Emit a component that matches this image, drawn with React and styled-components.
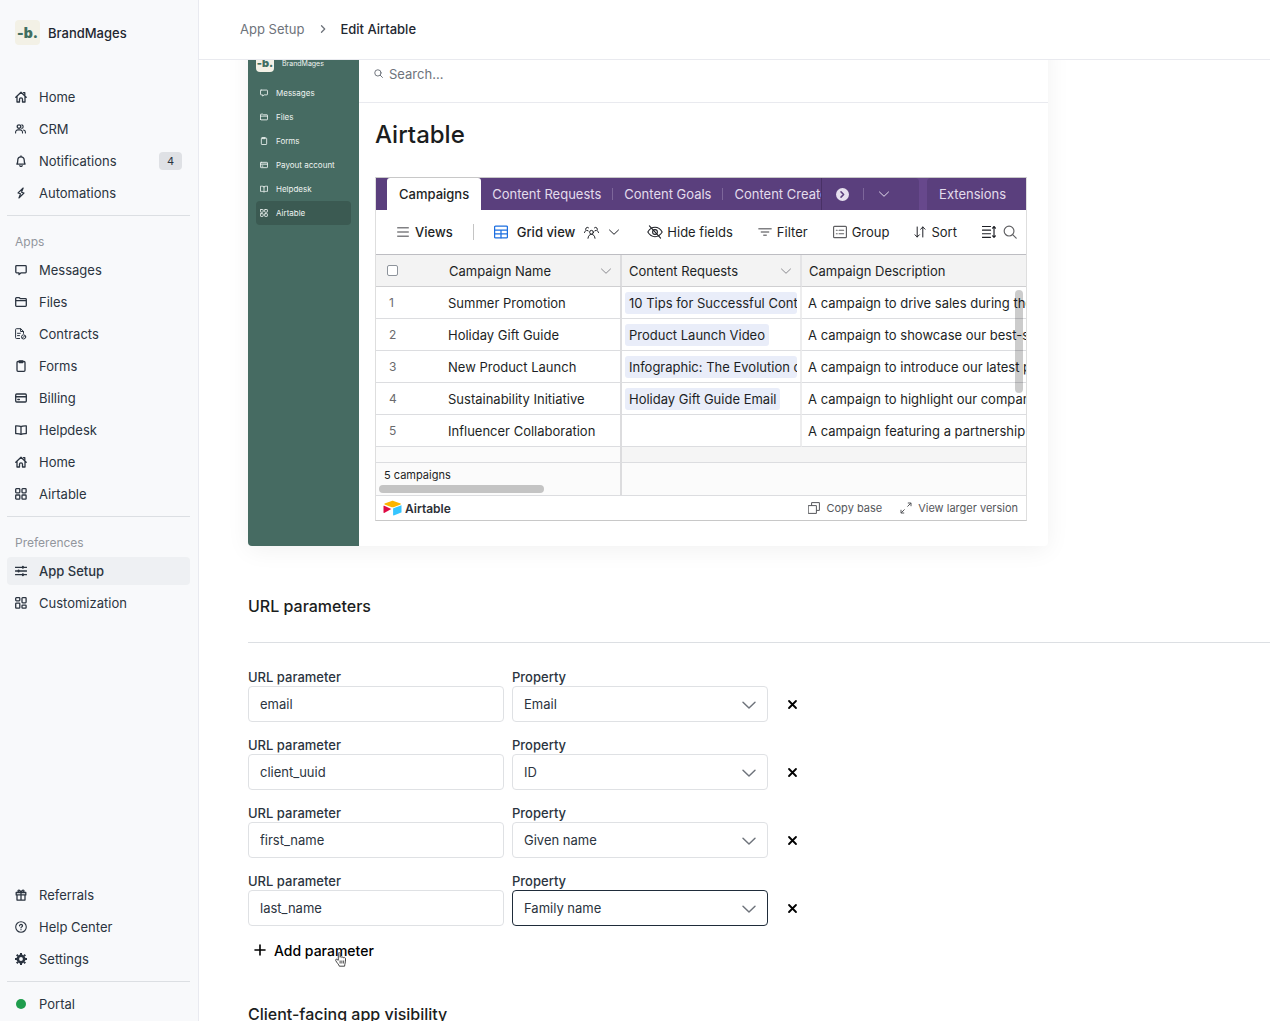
import { useLayoutEffect, useRef, useState } from 'react';
import styled, { createGlobalStyle } from 'styled-components';

const GlobalStyle = createGlobalStyle`
  * {
    box-sizing: border-box;
  }
  body {
    margin: 0;
    background: #fff;
    color: #2b3440;
    font-family: Inter, "Liberation Sans", sans-serif;
    font-size: 13px;
  }
  button, input, select {
    font: inherit;
    color: inherit;
  }
  button {
    padding: 0;
    border: 0;
    background: none;
    cursor: pointer;
  }
  h1, h2 {
    margin: 0;
    font-weight: 500;
  }
  ul {
    margin: 0;
    padding: 0;
    list-style: none;
  }
  a {
    color: inherit;
    text-decoration: none;
  }
`

/* ---------- icons ---------- */

const Svg = styled.svg`
  display: block;
  flex: none;
  fill: none;
  stroke: currentColor;
  stroke-width: ${props => props.$line || 1.3};
  stroke-linecap: round;
  stroke-linejoin: round;
`

const shapes = {
  home: <><path d="M.8 6.2 6 1.3l5.200 4.900M2 5.400v5.600h2.500V8.300a1.500 1.500 0 0 1 3 0V11H10V5.400" /><path d="M8.500 1.700h1.300v2.300" /></>,
  crm: <><circle cx="4" cy="3.600" r="1.800" /><path d="M.6 9.900v-.8a2.200 2.200 0 0 1 2.200-2.200h2.500a2.200 2.200 0 0 1 2.200 2.200v.8M6.800 1.900a1.800 1.800 0 0 1 0 3.500M8.500 7a2.200 2.200 0 0 1 1.900 2.100v.8" strokeWidth="1.100" /></>,
  bell: <><path d="M1.900 9.100h8.200C9.300 8 9.200 7 9.200 5a3.200 3.200 0 0 0-6.400 0c0 2-.1 3-.9 4.100z" /><path d="M4.900 10.700a1.200 1.200 0 0 0 2.200 0M6 1v.6" /></>,
  bolt: <path d="M8.200 1 3 6l2.500.7-1.600 4.300L9 6l-2.500-.7z" strokeWidth="1.100" />,
  message: <path d="M1.600 1.600h8.800a.8.800 0 0 1 .8.800v5.600a.8.800 0 0 1-.8.800H6.200L4 10.600V8.800H1.600a.8.800 0 0 1-.8-.8V2.400a.8.800 0 0 1 .8-.8z" />,
  folder: <path d="M.7 9.500v-7a.8.800 0 0 1 .8-.8h2.800l1.200 1h5a.8.800 0 0 1 .8.800v6a.8.800 0 0 1-.8.800h-9a.8.800 0 0 1-.8-.8zM.7 4.700h10.600" />,
  contract: <><path d="M4.600 10.500H1.400a.8.800 0 0 1-.8-.8V1.500a.8.800 0 0 1 .8-.8h4.300l2.800 2.700v2M5.600.8v2.700h2.800M2.500 5.300h2.800M2.500 7.600h2" strokeWidth="1" /><circle cx="8.600" cy="8.900" r="2.100" strokeWidth="1" /><path d="m7.400 10.100 2.400-2.400" strokeWidth="1" /></>,
  clipboard: <><rect x="2" y="1.500" width="8" height="9.800" rx="1" /><path d="M4.300.9h3.400v1.600H4.300z" /></>,
  card: <><rect x=".7" y="2" width="10.600" height="8" rx="1" /><path d="M.7 4.700h10.600M2.900 7.600h1.400" strokeWidth="1.500" /></>,
  book: <path d="M6 2.600C5 1.900 3.500 1.700.7 1.800v7.800C3.500 9.500 5 9.700 6 10.400c1-.7 2.500-.9 5.300-.8V1.800C8.500 1.700 7 1.900 6 2.600zm0 0v7.800" />,
  grid: <><rect x=".7" y=".7" width="4.100" height="4.100" rx=".7" /><rect x="7" y=".7" width="4.100" height="4.100" rx=".7" /><rect x=".7" y="7" width="4.100" height="4.100" rx=".7" /><rect x="7" y="7" width="4.100" height="4.100" rx=".7" /></>,
  sliders: <><path d="M.5 2.300h11M.5 6h11M.5 9.700h11" /><path d="M7.900 1.800v1M3.600 5.500v1M7.900 9.200v1" strokeWidth="2" /></>,
  blocks: <><rect x=".7" y=".7" width="4.100" height="3.100" rx=".7" /><rect x="7" y=".7" width="4.100" height="5.100" rx=".7" /><rect x=".7" y="6.100" width="4.100" height="5.100" rx=".7" /><rect x="7" y="8.100" width="4.100" height="3.100" rx=".7" /></>,
  gift: <path d="M1.200 3.500h9.600v2.400H1.200zM2 5.900h8v5.200H2zM6 3.500v7.600M6 3.400C4.900.5 2.700.7 3 2.200c.2.900 1.600 1.200 3 1.200zM6 3.400C7.100.5 9.300.7 9 2.200c-.2.900-1.600 1.200-3 1.200z" />,
  help: <><circle cx="6" cy="6" r="5.300" strokeWidth="1.100" /><path d="M4.500 4.800a1.500 1.300 0 1 1 2.400 1c-.6.300-.9.500-.9 1M6 8.600v.1" strokeWidth="1.200" /></>,
  gear: <><circle cx="6" cy="6" r="3.200" strokeWidth="2.600" /><path d="M6 0v2M6 10v2M0 6h2M10 6h2M1.700 1.700l1.200 1.200M9.100 9.100l1.200 1.200M1.700 10.300l1.200-1.200M9.100 2.900l1.200-1.200" strokeWidth="2" strokeLinecap="butt" /></>,
  chevronRight: <path d="m4 2.500 3.500 3.500L4 9.500" />,
  crumb: <path d="m5.500 2.800 3.200 3.200-3.200 3.200" />,
  chevronDown: <path d="M1.500 4 6 8.300 10.500 4" />,
  search: <><circle cx="5.200" cy="5.200" r="4.200" /><path d="m8.300 8.300 3 3" /></>,
  close: <path d="m2.200 2.200 7.600 7.600M9.800 2.200 2.200 9.800" />,
  plus: <path d="M6 1v10M1 6h10" />,
  menu: <path d="M.2 1.800h11.600M.2 6h11.600M.2 10.200h11.600" strokeLinecap="butt" />,
  table: <><rect x=".5" y="1" width="11" height="10" rx=".8" /><path d="M.5 4.300h11M.5 7.600h11M6 4.300V11" /></>,
  people: <><circle cx="6" cy="5.800" r="1.500" /><path d="M3.200 10.600c.2-2 1.300-3.100 2.800-3.100s2.600 1.100 2.800 3.100M3.600 2.200a1.300 1.300 0 1 0-1.700 2.200C1.100 4.600.6 5.100.4 6M3.300 4.700l-.7-.3M8.400 2.200a1.300 1.300 0 1 1 1.700 2.200c.8.200 1.300.7 1.500 1.600M8.700 4.700l.7-.3" /></>,
  eyeOff: <><path d="M.6 6C2 3.700 3.900 2.500 6 2.500s4 1.200 5.400 3.500C10 8.300 8.100 9.500 6 9.500S2 8.300.6 6z" /><circle cx="6" cy="6" r="1.800" /><path d="m1.800 1.400 8.400 9.200" /></>,
  filter: <path d="M.3 3.200h11.400M2.400 6h7.200M4.500 8.800h3" strokeLinecap="butt" />,
  group: <><rect x=".5" y="1.200" width="11" height="9.600" rx=".8" /><path d="M2.900 4.500h.7M5.200 4.500h3.900M2.900 7.500h.7M5.200 7.500h3.900" /></>,
  sort: <path d="M3.200 1v10M1 8.800 3.200 11l2.200-2.200M8.800 11V1M6.600 3.200 8.800 1 11 3.200" />,
  rowHeight: <path d="M.3 1.300h7M.3 4.400h7M.3 7.500h7M.3 10.600h7M10.300 1.400v9M9.100 2.600l1.200-1.300 1.200 1.300M9.100 9.300l1.200 1.300 1.200-1.300" />,
  copy: <path d="M.6 3.600h7.800v7.800H.6zM3.600 3.500V.6h7.800v7.800H8.500" />,
  expand: <path d="M7.700 4.300 10.800 1.200M8.200 1h2.800v2.800M4.300 7.700 1.200 10.800M1 8.200V11h2.800" />,
}

function Icon({ name, size = 12, line }){
  return <Svg width={size} height={size} viewBox="0 0 12 12" $line={line} aria-hidden="true">{shapes[name]}</Svg>
}

/* ---------- app sidebar ---------- */

const Page = styled.div`
  display: flex;
  height: 100vh;
`
const Sidebar = styled.aside`
  display: flex;
  flex-direction: column;
  flex: none;
  width: 199px;
  padding: 20px 8px 3px 7px;
  border-right: 1px solid #e9eaf0;
  background: #f8f9fb;
`
const Brand = styled.div`
  display: flex;
  align-items: center;
  gap: 8px;
  margin-bottom: 38px;
  padding-left: 8px;
  color: #1f2731;
  font-size: 13px;
  font-weight: 500;
`
const Logo = styled.span`
  display: flex;
  align-items: center;
  justify-content: center;
  width: ${props => props.$size}px;
  height: ${props => props.$size}px;
  border-radius: 4px;
  background: #f3f1e6;
  color: #416e60;
  font-size: ${props => props.$text}px;
  font-weight: 900;
`
const NavList = styled.ul`
  display: flex;
  flex-direction: column;
  gap: 4px;
`
const NavLink = styled.a`
  display: flex;
  align-items: center;
  gap: 12px;
  height: 28px;
  padding: 0 8px;
  border-radius: 4px;
  background: ${props => props.$active ? '#eef0f3' : 'transparent'};
  font-weight: ${props => props.$active ? 500 : 400};
`
const Count = styled.span`
  margin-left: auto;
  padding: 0 8px;
  border-radius: 4px;
  background: #dfe1e5;
  font-size: 11px;
  line-height: 18px;
`
const Line = styled.hr`
  width: 100%;
  height: 1px;
  margin: 8px 0;
  border: 0;
  background: #dcdfe3;
`
const NavTitle = styled.div`
  margin: 8px 0 4px;
  padding-left: 8px;
  color: #92969d;
  font-size: 12px;
  line-height: 20px;
`
const Spacer = styled.div`
  flex: 1;
`
const Dot = styled.span`
  width: 10px;
  height: 10px;
  margin: 0 1px;
  border-radius: 50%;
  background: #1f9d4d;
`

const mainNav = [
  { icon: 'home', label: 'Home' },
  { icon: 'crm', label: 'CRM' },
  { icon: 'bell', label: 'Notifications', count: 4 },
  { icon: 'bolt', label: 'Automations' },
]
const appsNav = [
  { icon: 'message', label: 'Messages' },
  { icon: 'folder', label: 'Files' },
  { icon: 'contract', label: 'Contracts' },
  { icon: 'clipboard', label: 'Forms' },
  { icon: 'card', label: 'Billing' },
  { icon: 'book', label: 'Helpdesk' },
  { icon: 'home', label: 'Home' },
  { icon: 'grid', label: 'Airtable' },
]
const prefNav = [
  { icon: 'sliders', label: 'App Setup', active: true },
  { icon: 'blocks', label: 'Customization' },
]
const bottomNav = [
  { icon: 'gift', label: 'Referrals' },
  { icon: 'help', label: 'Help Center' },
  { icon: 'gear', label: 'Settings' },
]

function Nav({ items }){
  return(
    <NavList>
      {items.map((item, i) => (
        <li key={i}>
          <NavLink href="#" $active={item.active}>
            <Icon name={item.icon} />
            {item.label}
            {item.count && <Count>{item.count}</Count>}
          </NavLink>
        </li>
      ))}
    </NavList>
  )
}

function AppSidebar(){
  return(
    <Sidebar>
      <Brand><Logo $size={25} $text={14}>-b.</Logo>BrandMages</Brand>
      <Nav items={mainNav} />
      <Line />
      <NavTitle>Apps</NavTitle>
      <Nav items={appsNav} />
      <Line />
      <NavTitle>Preferences</NavTitle>
      <Nav items={prefNav} />
      <Spacer />
      <Nav items={bottomNav} />
      <Line />
      <NavLink href="#"><Dot />Portal</NavLink>
    </Sidebar>
  )
}

/* ---------- main column ---------- */

const Main = styled.main`
  display: flex;
  flex: 1;
  flex-direction: column;
  min-width: 0;
`
const TopBar = styled.nav`
  display: flex;
  flex: none;
  align-items: center;
  gap: 12px;
  height: 60px;
  padding: 0 41px 2px;
  border-bottom: 1px solid #e9eaef;
  color: #6e737b;
`
const Current = styled.span`
  color: #1f2731;
  font-weight: 500;
`
const Content = styled.div`
  flex: 1;
  min-height: 0;
  padding: 24px 0 160px 49px;
  overflow-y: auto;
  scrollbar-width: none;
`

/* ---------- portal preview ---------- */

const Preview = styled.section`
  display: flex;
  max-width: 800px;
  margin-bottom: 12px;
  border-radius: 4px;
  box-shadow: 0 4px 24px rgba(0, 0, 0, 0.06);
`
const PreviewSide = styled.div`
  flex: none;
  width: 111px;
  padding: 19px 8px;
  border-radius: 4px 0 0 4px;
  background: #466b62;
  color: #eef3f1;
  font-size: 8px;
`
const PreviewBrand = styled.div`
  display: flex;
  align-items: center;
  gap: 8px;
  margin-bottom: 9px;
  font-size: 7px;
`
const PreviewLink = styled.a`
  display: flex;
  align-items: center;
  gap: 8px;
  height: 24px;
  padding: 0 4px;
  border-radius: 4px;
  background: ${props => props.$active ? '#3b5a52' : 'transparent'};
`
const PreviewMain = styled.div`
  flex: 1;
  min-width: 0;
`
const SearchRow = styled.label`
  display: flex;
  align-items: center;
  gap: 6px;
  height: 68px;
  padding: 10px 15px 0;
  border-bottom: 1px solid #e9eaef;
  color: #6e737b;
`
const SearchInput = styled.input`
  flex: 1;
  min-width: 0;
  padding: 0;
  border: 0;
  outline: 0;
  background: none;
  &::placeholder {
    color: #6e737b;
    opacity: 1;
  }
`
const PreviewBody = styled.div`
  padding: 16px 21px 25px 16px;
`
const PreviewTitle = styled.h1`
  margin-bottom: 26px;
  color: #1b1d20;
  font-size: 24px;
  line-height: 32px;
`

/* ---------- airtable embed ---------- */

const Embed = styled.div`
  border: 1px solid #c8c8c8;
  border-left-color: #dedede;
  border-right-color: #dedede;
  color: #1d1f25;
`
const Tabs = styled.div`
  display: flex;
  gap: 8px;
  height: 32px;
  background: #67488c;
  color: #e3dcec;
`
const TabsLeft = styled.div`
  display: flex;
  flex: 1;
  min-width: 0;
  border-radius: 0 4px 0 0;
  background: #5a3f7d;
`
const TabList = styled.div`
  display: flex;
  flex: 1;
  min-width: 0;
  padding-left: 11px;
  overflow: hidden;
`
const Tab = styled.button`
  display: flex;
  flex: none;
  align-items: center;
  height: 32px;
  white-space: nowrap;
  &::after {
    content: "";
    width: 1px;
    height: 12px;
    margin: 0 0 0 11px;
    background: #7d669a;
  }
  & + & {
    padding-left: 11px;
  }
  ${props => props.$active && `
    padding: 0 12px;
    border-radius: 3px 3px 0 0;
    background: #fff;
    color: #1d1f25;
    font-weight: 500;
    &::after {
      display: none;
    }
  `}
`
const TabTools = styled.div`
  display: flex;
  flex: none;
  align-items: center;
  gap: 14px;
  width: 98px;
  padding-left: 14px;
  border-left: 1px solid #493166;
`
const NextTabs = styled.button`
  display: flex;
  align-items: center;
  justify-content: center;
  width: 13px;
  height: 13px;
  border-radius: 50%;
  background: #e6e0ee;
  color: #5a3f7d;
`
const Bar = styled.span`
  width: 1px;
  height: ${props => props.$tall ? 16 : 12}px;
  background: ${props => props.$tall ? '#c4c4c4' : '#7d669a'};
`
const Extensions = styled.button`
  padding: 0 20px 0 12px;
  border-radius: 4px 0 0 0;
  background: #5a3f7d;
`
const Toolbar = styled.div`
  display: flex;
  align-items: center;
  gap: 27px;
  height: 45px;
  padding: 0 9px 0 21px;
  border-bottom: 1px solid #bdbdc2;
`
const ToolGroup = styled.div`
  display: flex;
  align-items: center;
  gap: ${props => props.$gap}px;
`
const Tool = styled.button`
  display: flex;
  align-items: center;
  gap: ${props => props.$gap || 5}px;
  font-weight: ${props => props.$strong ? 500 : 400};
  white-space: nowrap;
`
const Tint = styled.span`
  color: ${props => props.$color};
`
const GridWrap = styled.div`
  position: relative;
`
const Grid = styled.table`
  width: 100%;
  border-collapse: separate;
  border-spacing: 0;
  table-layout: fixed;
`
const Th = styled.th`
  height: 32px;
  padding: 0 8px 0 ${props => props.$pad || 7}px;
  border-bottom: 1px solid #cfcfd1;
  border-right: ${props => props.$edge ? `2px solid ${props.$edge}` : 0};
  background: #f3f3f3;
  font-weight: 400;
  text-align: left;
  white-space: nowrap;
`
const ThInner = styled.div`
  display: flex;
  align-items: center;
  justify-content: space-between;
`
const Td = styled.td`
  height: 32px;
  padding: 0 3px 0 ${props => props.$pad || 6}px;
  border-bottom: 1px solid #dcdde0;
  border-right: ${props => props.$edge ? `2px solid ${props.$edge}` : 0};
  color: ${props => props.$dim ? '#6b6b6e' : 'inherit'};
  font-size: ${props => props.$dim ? 12 : 13}px;
  white-space: nowrap;
  overflow: hidden;
`
const Tag = styled.div`
  width: fit-content;
  max-width: 100%;
  padding: 0 4px;
  border-radius: 3px;
  background: #e9edf9;
  line-height: 22px;
  overflow: hidden;
`
const Rest = styled.td`
  height: ${props => props.$h}px;
  padding: 0 0 8px 8px;
  border-bottom: 1px solid #dcdde0;
  border-right: ${props => props.$edge ? `2px solid ${props.$edge}` : 0};
  background: ${props => props.$bg};
  font-size: 11px;
`
const Check = styled.input`
  appearance: none;
  display: block;
  width: 11px;
  height: 11px;
  margin: 0;
  border: 1px solid #8d939b;
  border-radius: 2px;
  background: #fff;
`
const ThumbX = styled.span`
  position: absolute;
  left: 3px;
  bottom: 3px;
  width: 165px;
  height: 8px;
  border-radius: 4px;
  background: #c4c4c4;
`
const ThumbY = styled.span`
  position: absolute;
  top: 35px;
  right: 3px;
  width: 8px;
  height: 103px;
  border-radius: 4px;
  background: rgba(0, 0, 0, 0.2);
`
const EmbedFooter = styled.div`
  display: flex;
  align-items: center;
  gap: 18px;
  height: 24px;
  padding: 0 8px 0 7px;
  color: #55575b;
  font-size: 11px;
`
const AirtableMark = styled.a`
  display: flex;
  align-items: center;
  gap: 3px;
  margin-right: auto;
  color: #2d3038;
  font-size: 12px;
  font-weight: 600;
`
const FooterLink = styled.a`
  display: flex;
  align-items: center;
  gap: 6px;
`

const campaigns = [
  { name: 'Summer Promotion', request: '10 Tips for Successful Content', text: 'A campaign to drive sales during the summer' },
  { name: 'Holiday Gift Guide', request: 'Product Launch Video', text: 'A campaign to showcase our best-selling' },
  { name: 'New Product Launch', request: 'Infographic: The Evolution of', text: 'A campaign to introduce our latest product' },
  { name: 'Sustainability Initiative', request: 'Holiday Gift Guide Email', text: 'A campaign to highlight our company' },
  { name: 'Influencer Collaboration', request: '', text: 'A campaign featuring a partnership with' },
]

function AirtableEmbed(){
  return(
    <Embed>
      <Tabs>
        <TabsLeft>
          <TabList>
            <Tab $active>Campaigns</Tab>
            <Tab>Content Requests</Tab>
            <Tab>Content Goals</Tab>
            <Tab>Content Creators</Tab>
          </TabList>
          <TabTools>
            <NextTabs aria-label="More tables"><Icon name="chevronRight" size={9} line={2} /></NextTabs>
            <Bar />
            <button aria-label="Table list"><Icon name="chevronDown" line={1} /></button>
          </TabTools>
        </TabsLeft>
        <Extensions>Extensions</Extensions>
      </Tabs>
      <Toolbar>
        <ToolGroup $gap={20}>
          <Tool $strong $gap={6}><Tint $color="#808083"><Icon name="menu" size={12} line={1.6} /></Tint>Views</Tool>
          <Bar $tall />
          <ToolGroup $gap={9}>
            <Tool $strong $gap={9}>
              <Tint $color="#1d6fe0"><Icon name="table" size={14} line={1.1} /></Tint>
              Grid view
              <Icon name="people" size={15} line={0.8} />
            </Tool>
            <button aria-label="View options"><Icon name="chevronDown" line={1} /></button>
          </ToolGroup>
        </ToolGroup>
        <ToolGroup $gap={25}>
          <Tool $gap={4}><Icon name="eyeOff" size={16} line={0.8} />Hide fields</Tool>
          <Tool><Tint $color="#808083"><Icon name="filter" size={14} /></Tint>Filter</Tool>
          <Tool><Tint $color="#606063"><Icon name="group" size={14} line={1} /></Tint>Group</Tool>
          <Tool><Icon name="sort" size={12} line={1} />Sort</Tool>
          <ToolGroup $gap={7}>
            <button aria-label="Row height"><Icon name="rowHeight" size={14} line={1} /></button>
            <button aria-label="Search table"><Tint $color="#606063"><Icon name="search" size={14} line={1} /></Tint></button>
          </ToolGroup>
        </ToolGroup>
      </Toolbar>
      <GridWrap>
        <Grid>
          <colgroup>
            <col style={{ width: 60 }} />
            <col style={{ width: 186 }} />
            <col style={{ width: 180 }} />
            <col />
          </colgroup>
          <thead>
            <tr>
              <Th $pad={11}><Check type="checkbox" aria-label="Select all" /></Th>
              <Th $pad={13} $edge="#dcdcde"><ThInner>Campaign Name<Tint $color="#8b8b90"><Icon name="chevronDown" line={1} /></Tint></ThInner></Th>
              <Th $edge="#e4e4e6"><ThInner>Content Requests<Tint $color="#8b8b90"><Icon name="chevronDown" line={1} /></Tint></ThInner></Th>
              <Th>Campaign Description</Th>
            </tr>
          </thead>
          <tbody>
            {campaigns.map((c, i) => (
              <tr key={c.name}>
                <Td $pad={13} $dim>{i + 1}</Td>
                <Td $pad={12} $edge="#dcdcde">{c.name}</Td>
                <Td $pad={3} $edge="#ededee">{c.request && <Tag>{c.request}</Tag>}</Td>
                <Td>{c.text}</Td>
              </tr>
            ))}
            <tr>
              <Rest colSpan={2} $h={16} $edge="#dcdcde" $bg="#fbfbfb" />
              <Rest colSpan={2} $bg="#f5f5f5" />
            </tr>
            <tr>
              <Rest colSpan={2} $h={33} $edge="#dcdcde" $bg="#fbfbfb">5 campaigns</Rest>
              <Rest colSpan={2} $bg="#fbfbfb" />
            </tr>
          </tbody>
        </Grid>
        <ThumbX />
        <ThumbY />
      </GridWrap>
      <EmbedFooter>
        <AirtableMark href="#">
          <svg width="19" height="16" viewBox="0 0 19 16" aria-hidden="true">
            <path d="M8.600.9 1.600 3.600c-.4.200-.4.600 0 .8l7.100 2.800c.6.200 1.200.2 1.800 0l7.100-2.800c.4-.2.400-.6 0-.8L10.500.9c-.6-.2-1.200-.2-1.900 0z" fill="#fcb400" />
            <path d="M10.100 8.700v6.400c0 .3.300.5.600.4l7.500-2.900c.2-.1.300-.2.300-.4V5.800c0-.3-.3-.5-.6-.4l-7.500 2.900c-.2.100-.3.200-.3.400z" fill="#35c5ff" />
            <path d="M8.300 9 1.200 5.700c-.3-.1-.7 0-.7.400v6.500c0 .3.300.5.700.4z" fill="#df0a44" />
          </svg>
          Airtable
        </AirtableMark>
        <FooterLink href="#"><Icon name="copy" line={1} />Copy base</FooterLink>
        <FooterLink href="#"><Icon name="expand" line={1} />View larger version</FooterLink>
      </EmbedFooter>
    </Embed>
  )
}

const portalNav = [
  { icon: 'message', label: 'Messages' },
  { icon: 'folder', label: 'Files' },
  { icon: 'clipboard', label: 'Forms' },
  { icon: 'card', label: 'Payout account' },
  { icon: 'book', label: 'Helpdesk' },
  { icon: 'grid', label: 'Airtable', active: true },
]

function PortalPreview(){
  return(
    <Preview>
      <PreviewSide>
        <PreviewBrand><Logo $size={18} $text={11}>-b.</Logo>BrandMages</PreviewBrand>
        {portalNav.map((item) => (
          <PreviewLink key={item.label} href="#" $active={item.active}>
            <Icon name={item.icon} size={8} />
            {item.label}
          </PreviewLink>
        ))}
      </PreviewSide>
      <PreviewMain>
        <SearchRow>
          <Icon name="search" size={9} />
          <SearchInput placeholder="Search..." aria-label="Search" />
        </SearchRow>
        <PreviewBody>
          <PreviewTitle>Airtable</PreviewTitle>
          <AirtableEmbed />
        </PreviewBody>
      </PreviewMain>
    </Preview>
  )
}

/* ---------- url parameters ---------- */

const Section = styled.section`
  padding-top: 36px;
`
const SectionTitle = styled.h2`
  padding-bottom: 24px;
  border-bottom: 1px solid #dcdfe3;
  color: #1b1d20;
  font-size: 16px;
  line-height: 24px;
`
const Params = styled.div`
  display: flex;
  flex-direction: column;
  gap: 14px;
  margin: 25px 0 8px;
`
const ParamRow = styled.div`
  display: grid;
  grid-template-columns: minmax(0, 256px) minmax(0, 256px) 32px;
  align-items: end;
  gap: 8px;
`
const Label = styled.label`
  display: block;
  font-size: 13px;
  font-weight: 500;
  line-height: 18px;
`
const TextInput = styled.input`
  display: block;
  width: 100%;
  height: 36px;
  padding: 0 11px;
  border: 1px solid #dfe1e4;
  border-radius: 4px;
  outline: 0;
  background: #fff;
`
const SelectBox = styled.div`
  position: relative;
  color: #6e737b;
`
const Select = styled.select`
  appearance: none;
  display: block;
  width: 100%;
  height: 36px;
  padding: 0 36px 0 11px;
  border: 1px solid ${props => props.$focused ? '#1f2c3a' : '#dfe1e4'};
  border-radius: 4px;
  outline: 0;
  background: #fff;
  color: #2b3440;
`
const SelectArrow = styled.span`
  position: absolute;
  top: 11px;
  right: 11px;
  pointer-events: none;
`
const Remove = styled.button`
  display: flex;
  align-items: center;
  justify-content: center;
  height: 36px;
  color: #000;
`
const AddButton = styled.button`
  position: relative;
  display: flex;
  align-items: center;
  gap: 8px;
  height: 32px;
  padding: 0 6px;
  color: #000;
  font-size: 14px;
  font-weight: 500;
`
const Hand = styled.svg`
  position: absolute;
  left: 87px;
  top: 18px;
`

const properties = ['Email', 'ID', 'Given name', 'Family name']

function UrlParameters(){
  let [params, setParams] = useState([
    { id: 1, key: 'email', property: 'Email' },
    { id: 2, key: 'client_uuid', property: 'ID' },
    { id: 3, key: 'first_name', property: 'Given name' },
    { id: 4, key: 'last_name', property: 'Family name' },
  ])
  let [active, setActive] = useState(4)

  const change = (id, patch) => {
    setParams(params.map((p) => p.id === id ? { ...p, ...patch } : p))
  }
  const add = () => {
    setParams([...params, { id: Date.now(), key: '', property: 'Email' }])
  }

  return(
    <Section>
      <SectionTitle>URL parameters</SectionTitle>
      <Params>
        {params.map((p) => (
          <ParamRow key={p.id}>
            <div>
              <Label htmlFor={'key-' + p.id}>URL parameter</Label>
              <TextInput id={'key-' + p.id} value={p.key} onChange={(e) => change(p.id, { key: e.target.value })} />
            </div>
            <div>
              <Label htmlFor={'prop-' + p.id}>Property</Label>
              <SelectBox>
                <Select
                  id={'prop-' + p.id}
                  value={p.property}
                  $focused={active === p.id}
                  onFocus={() => setActive(p.id)}
                  onChange={(e) => change(p.id, { property: e.target.value })}
                >
                  {properties.map((name) => <option key={name}>{name}</option>)}
                </Select>
                <SelectArrow><Icon name="chevronDown" size={16} line={1.1} /></SelectArrow>
              </SelectBox>
            </div>
            <Remove aria-label="Remove parameter" onClick={() => setParams(params.filter((x) => x.id !== p.id))}>
              <Icon name="close" size={11} line={2} />
            </Remove>
          </ParamRow>
        ))}
      </Params>
      <AddButton onClick={add}>
        <Icon name="plus" line={1.6} />
        Add parameter
        <Hand width="12" height="15" viewBox="0 0 12 15" fill="#fff" stroke="#333" strokeWidth=".9" strokeLinejoin="round" aria-hidden="true">
          <path d="M3.300 8.200V1.500c0-1.300 1.800-1.300 1.800 0v3.700c.3-.8 1.700-.7 1.800.3.400-.7 1.700-.5 1.800.4.500-.6 1.800-.4 1.800.8v3c0 1.500-.8 2-.9 4.500H4.300C4 12.600 1.800 10.800.7 8.500c-.5-1.200.8-1.700 1.500-.9z" />
          <path d="M5.100 8.500v3M6.900 8.500v3M8.700 8.500v3" fill="none" />
        </Hand>
      </AddButton>
    </Section>
  )
}

function App(){
  let content = useRef(null)

  useLayoutEffect(() => {
    content.current.scrollTop = 49
  }, [])

  return(
    <>
      <GlobalStyle />
      <Page>
        <AppSidebar />
        <Main>
          <TopBar>
            <a href="#">App Setup</a>
            <Icon name="crumb" />
            <Current>Edit Airtable</Current>
          </TopBar>
          <Content ref={content}>
            <PortalPreview />
            <UrlParameters />
            <Section>
              <SectionTitle>Client-facing app visibility</SectionTitle>
            </Section>
          </Content>
        </Main>
      </Page>
    </>
  )
}

export default App;
